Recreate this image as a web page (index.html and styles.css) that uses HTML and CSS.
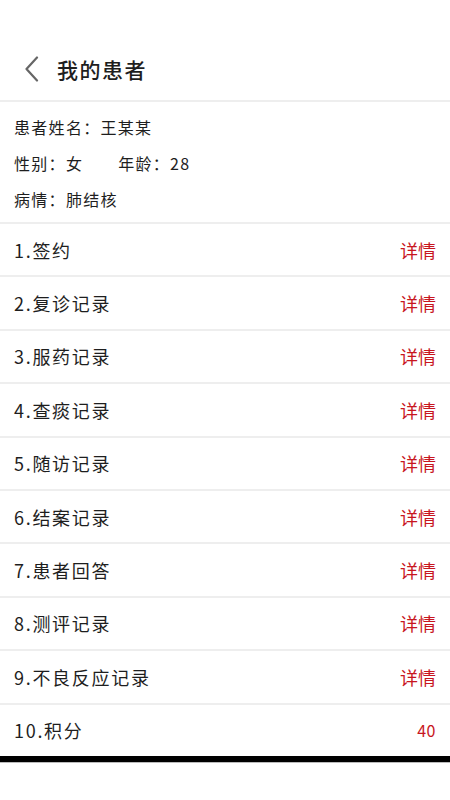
FILE: index.html
```html
<!DOCTYPE html>
<html lang="zh-CN">
<head>
<meta charset="utf-8">
<title>我的患者</title>
<link rel="stylesheet" href="styles.css">
</head>
<body>
<div class="app">
  <header class="header">
    <svg class="back" width="16" height="26" viewBox="0 0 16 26"><path d="M13 1.5 L2.5 13 L13 24.5" fill="none" stroke="#666" stroke-width="2.2" stroke-linecap="round" stroke-linejoin="round"/></svg>
    <h1 class="title">我的患者</h1>
  </header>
  <section class="info">
    <div class="info-line">患者姓名：王某某</div>
    <div class="info-line"><span class="gender">性别：女</span><span>年龄：28</span></div>
    <div class="info-line">病情：肺结核</div>
  </section>
  <ul class="list">
    <li class="row"><span class="label">1.签约</span><span class="action">详情</span></li>
    <li class="row"><span class="label">2.复诊记录</span><span class="action">详情</span></li>
    <li class="row"><span class="label">3.服药记录</span><span class="action">详情</span></li>
    <li class="row"><span class="label">4.查痰记录</span><span class="action">详情</span></li>
    <li class="row"><span class="label">5.随访记录</span><span class="action">详情</span></li>
    <li class="row"><span class="label">6.结案记录</span><span class="action">详情</span></li>
    <li class="row"><span class="label">7.患者回答</span><span class="action">详情</span></li>
    <li class="row"><span class="label">8.测评记录</span><span class="action">详情</span></li>
    <li class="row"><span class="label">9.不良反应记录</span><span class="action">详情</span></li>
    <li class="row"><span class="label">10.积分</span><span class="score">40</span></li>
  </ul>
  <div class="bottom-bar"></div>
</div>
</body>
</html>
```
FILE: styles.css
```css
* { box-sizing: border-box; }
html, body {
  margin: 0;
  padding: 0;
  background: #fff;
}
body {
  font-family: "Noto Sans CJK SC", "Noto Sans", sans-serif;
  color: #1e1e1e;
}
.app {
  width: 450px;
  display: flex;
  flex-direction: column;
}
.header {
  height: 102px;
  display: flex;
  align-items: center;
  padding: 38px 0 0 24px;
  border-bottom: 2px solid #eeeeee;
}
.back {
  display: block;
  flex: none;
}
.title {
  margin: 0 0 0 17px;
  font-size: 21px;
  font-weight: 500;
  letter-spacing: 1.5px;
  line-height: 1;
}
.info {
  height: 122px;
  padding: 7px 0 0 14px;
  border-bottom: 2px solid #eeeeee;
  display: flex;
  flex-direction: column;
}
.info-line {
  font-size: 16px;
  letter-spacing: 1.3px;
  line-height: 36px;
  height: 36px;
}
.gender {
  margin-right: 35px;
}
.list {
  list-style: none;
  margin: 0;
  padding: 0;
}
.row {
  height: 53.4px;
  display: flex;
  align-items: center;
  justify-content: space-between;
  padding: 0 14px;
  border-bottom: 2px solid #eeeeee;
  font-size: 18px;
  letter-spacing: 1.7px;
}
.row:last-child {
  border-bottom: none;
  height: 51px;
}
.action {
  color: #c8161e;
  letter-spacing: 0;
}
.score {
  color: #c8161e;
  font-size: 16px;
  letter-spacing: 0.5px;
}
.bottom-bar {
  height: 7px;
  background: #000;
  border-bottom: 1px solid #bbb;
}
```
